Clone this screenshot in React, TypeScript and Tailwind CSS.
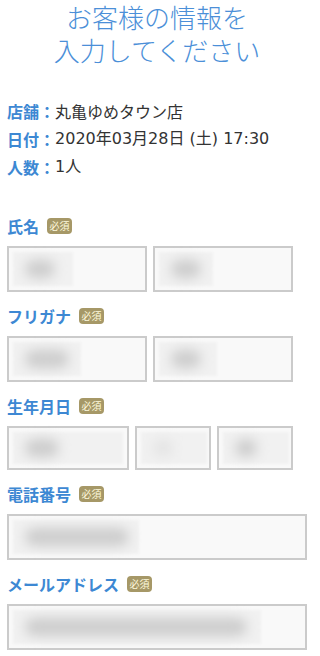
// Reservation customer info form

const jp = '[font-family:"Noto_Sans_CJK_JP","Noto_Sans",sans-serif]';
const latin = '[font-family:"DejaVu_Sans","Noto_Sans_CJK_JP",sans-serif]';

const Badge = () => (
  <span className="ml-2 inline-flex h-4 w-[25px] items-center justify-center rounded-sm bg-[#a69867] text-[10px] leading-none text-[#fdf8dc]">
    必須
  </span>
);

const Label = ({ text }: { text: string }) => (
  <div className="mb-2 flex h-6 items-center">
    <span className="text-[16px] font-bold leading-6 text-[#3d88d3]">{text}</span>
    <Badge />
  </div>
);

// blurred placeholder standing for masked user input
const Masked = ({ box, blob }: { box: string; blob: string }) => (
  <div className="h-full w-full p-[4px]">
    <div className={`flex h-full items-center bg-[#f1f1f1] blur-[1px] ${box}`}>
      <div className={`ml-3 h-[18px] rounded-full bg-[#cdcdcd] blur-[6px] ${blob}`} />
    </div>
  </div>
);

const Field = ({ className, box, blob }: { className: string; box: string; blob: string }) => (
  <div className={`border-2 border-[#cbcbcb] bg-[#f9f9f9] ${className}`}>
    <Masked box={box} blob={blob} />
  </div>
);

const Info = ({ label, children }: { label: string; children: React.ReactNode }) => (
  <p className="flex h-7 items-center whitespace-pre">
    <span className="font-bold text-[#3d88d3]">{label}：</span>
    {children}
  </p>
);

export default function App() {
  return (
    <div className={`min-h-[656px] bg-white pl-[7px] pr-[13px] text-[#333] ${jp}`}>
      <h1 className="text-center text-[26px] font-light leading-[33px] text-[#4b8fd8]">
        お客様の情報を
        <br />
        入力してください
      </h1>

      <div className="mt-[31px] text-[16px] leading-7">
        <Info label="店舗">
          <span>丸亀ゆめタウン店</span>
        </Info>
        <Info label="日付">
          <span className={latin}>2020年03月28日 (土) 17:30</span>
        </Info>
        <Info label="人数">
          <span className={latin}>1人</span>
        </Info>
      </div>

      <div className="mt-[33px]">
        <Label text="氏名" />
        <div className="flex gap-[6px]">
          <Field className="h-[46px] w-[140px]" box="w-[60px]" blob="w-[30px]" />
          <Field className="h-[46px] w-[140px]" box="w-[54px] bg-[#ebebeb]" blob="w-[30px]" />
        </div>
      </div>

      <div className="mt-3">
        <Label text="フリガナ" />
        <div className="flex gap-[6px]">
          <Field className="h-[46px] w-[140px]" box="w-[68px]" blob="w-[44px]" />
          <Field className="h-[46px] w-[140px]" box="w-[58px]" blob="w-[30px]" />
        </div>
      </div>

      <div className="mt-3">
        <Label text="生年月日" />
        <div className="flex gap-[6px]">
          <Field className="h-[44px] w-[122px]" box="w-[110px]" blob="w-[34px]" />
          <Field className="h-[44px] w-[76px]" box="w-[66px]" blob="w-[20px] bg-[#e4e4e4]" />
          <Field className="h-[44px] w-[76px]" box="w-[66px]" blob="w-[22px]" />
        </div>
      </div>

      <div className="mt-3">
        <Label text="電話番号" />
        <Field className="h-[46px] w-full" box="w-[126px]" blob="w-[104px]" />
      </div>

      <div className="mt-3">
        <Label text="メールアドレス" />
        <Field className="h-[46px] w-full" box="w-[248px]" blob="w-[222px]" />
      </div>
    </div>
  );
}
